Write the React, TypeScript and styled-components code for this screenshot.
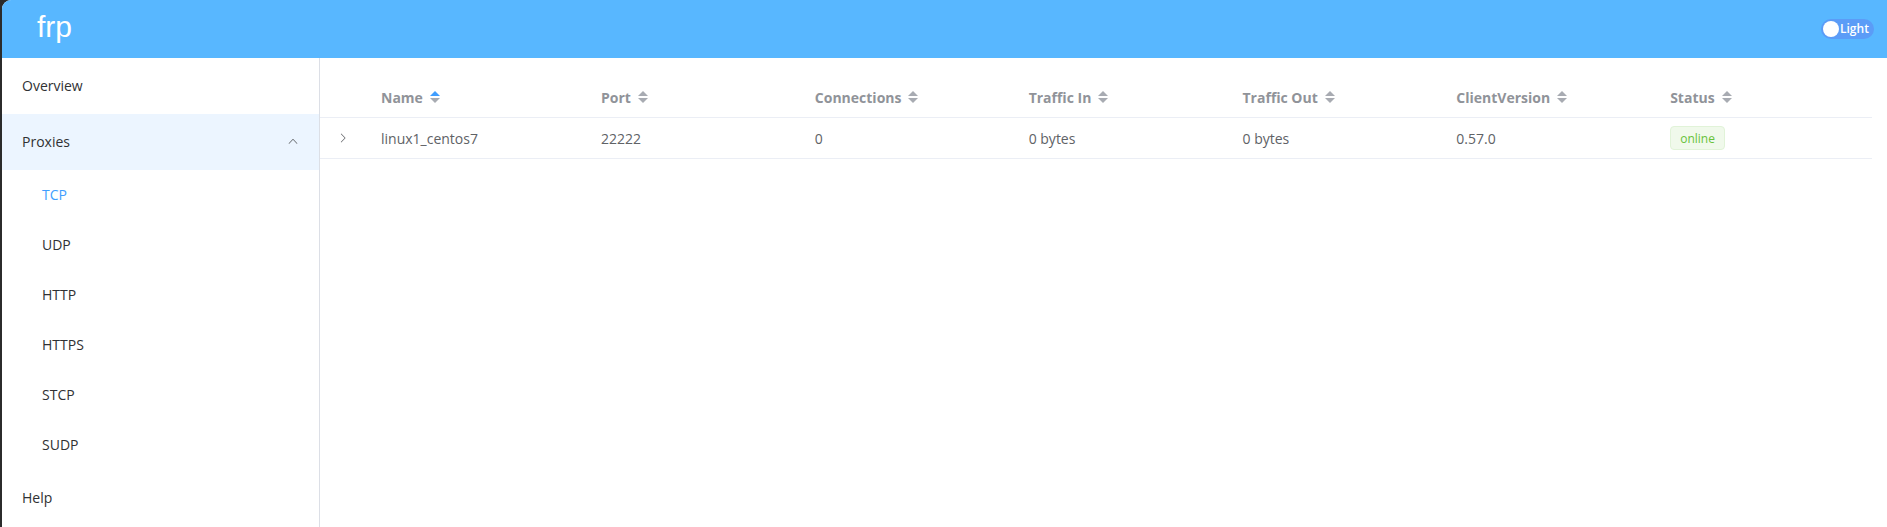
import React from 'react';
import styled, { createGlobalStyle } from 'styled-components';

const GlobalStyle = createGlobalStyle`
    html, body {
        margin: 0;
        padding: 0;
        background: #2b2b2b;
        height: 100%;
    }
    body {
        font-family: 'Open Sans', 'Liberation Sans', sans-serif;
        font-size: 14px;
        color: #303133;
    }
    * {
        box-sizing: border-box;
    }
`;

type Proxy = {
    name: string;
    port: number;
    conns: number;
    trafficIn: string;
    trafficOut: string;
    version: string;
    status: string;
};

const proxies: Proxy[] = [
    {
        name: 'linux1_centos7',
        port: 22222,
        conns: 0,
        trafficIn: '0 bytes',
        trafficOut: '0 bytes',
        version: '0.57.0',
        status: 'online',
    },
];

const columns = ['Name', 'Port', 'Connections', 'Traffic In', 'Traffic Out', 'ClientVersion', 'Status'];
const proxyTypes = ['TCP', 'UDP', 'HTTP', 'HTTPS', 'STCP', 'SUDP'];

const ChevronUp = () => (
    <svg width="12" height="12" viewBox="0 0 1024 1024">
        <path
            fill="currentColor"
            d="M488.832 344.32l-339.84 356.672a32 32 0 0 0 0 44.16l.384.384a29.44 29.44 0 0 0 42.688 0l320-335.872 319.872 335.872a29.44 29.44 0 0 0 42.688 0l.384-.384a32 32 0 0 0 0-44.16L535.168 344.32a32 32 0 0 0-46.336 0z"
        />
    </svg>
);

const ChevronRight = () => (
    <svg width="12" height="12" viewBox="0 0 1024 1024">
        <path
            fill="currentColor"
            d="M340.864 149.312a30.592 30.592 0 0 0 0 42.752L652.736 512 340.864 831.872a30.592 30.592 0 0 0 0 42.752 29.12 29.12 0 0 0 41.728 0L714.24 534.336a32 32 0 0 0 0-44.672L382.592 149.376a29.12 29.12 0 0 0-41.728 0z"
        />
    </svg>
);

const App = () => {
    return (
        <>
            <GlobalStyle />
            <StyledWindow>
                <StyledHeader>
                    <StyledBrand>frp</StyledBrand>
                    <StyledSwitch>
                        <StyledKnob />
                        <StyledSwitchText>Light</StyledSwitchText>
                    </StyledSwitch>
                </StyledHeader>
                <StyledBody>
                    <StyledSidebar>
                        <StyledMenuItem>Overview</StyledMenuItem>
                        <StyledMenuItem $open>
                            Proxies
                            <StyledArrow>
                                <ChevronUp />
                            </StyledArrow>
                        </StyledMenuItem>
                        {proxyTypes.map((t) => (
                            <StyledSubItem key={t} $active={t === 'TCP'}>
                                {t}
                            </StyledSubItem>
                        ))}
                        <StyledMenuItem>Help</StyledMenuItem>
                    </StyledSidebar>
                    <StyledMain>
                        <StyledHeadRow>
                            <StyledCell />
                            {columns.map((c, i) => (
                                <StyledHeadCell key={c}>
                                    {c}
                                    <StyledCarets>
                                        <StyledCaretUp $active={i === 0} />
                                        <StyledCaretDown />
                                    </StyledCarets>
                                </StyledHeadCell>
                            ))}
                        </StyledHeadRow>
                        {proxies.map((p) => (
                            <StyledRow key={p.name}>
                                <StyledExpand>
                                    <ChevronRight />
                                </StyledExpand>
                                <StyledCell>{p.name}</StyledCell>
                                <StyledCell>{p.port}</StyledCell>
                                <StyledCell>{p.conns}</StyledCell>
                                <StyledCell>{p.trafficIn}</StyledCell>
                                <StyledCell>{p.trafficOut}</StyledCell>
                                <StyledCell>{p.version}</StyledCell>
                                <StyledCell>
                                    <StyledTag>{p.status}</StyledTag>
                                </StyledCell>
                            </StyledRow>
                        ))}
                    </StyledMain>
                </StyledBody>
            </StyledWindow>
        </>
    );
};

const StyledWindow = styled.div`
    margin-left: 2px;
    height: 100vh;
    background: #fff;
    border-top-left-radius: 9px;
    overflow: hidden;
    display: flex;
    flex-direction: column;
`;

const StyledHeader = styled.header`
    height: 58px;
    flex: none;
    background: #58b7ff;
    display: flex;
    align-items: center;
    justify-content: space-between;
    padding: 0 13px 0 35px;
`;

const StyledBrand = styled.div`
    color: #fff;
    font-family: 'Liberation Sans', Arial, sans-serif;
    font-size: 30px;
    line-height: 1;
    margin-top: -4px;
`;

const StyledSwitch = styled.div`
    width: 53px;
    height: 20px;
    border-radius: 10px;
    background: #5b9cf7;
    display: flex;
    align-items: center;
    padding: 0 2px;
    gap: 1px;
`;

const StyledKnob = styled.span`
    width: 16px;
    height: 16px;
    border-radius: 50%;
    background: #fff;
    flex: none;
`;

const StyledSwitchText = styled.span`
    color: #fff;
    font-size: 12px;
    font-weight: 600;
    line-height: 1;
`;

const StyledBody = styled.div`
    flex: 1;
    display: flex;
    min-height: 0;
`;

const StyledSidebar = styled.nav`
    width: 318px;
    flex: none;
    border-right: 1px solid #dcdfe6;
`;

const StyledMenuItem = styled.div<{ $open?: boolean }>`
    height: 56px;
    display: flex;
    align-items: center;
    justify-content: space-between;
    padding: 0 20px 2px;
    color: #303133;
    background: ${(props) => (props.$open ? '#ecf5ff' : 'transparent')};
`;

const StyledArrow = styled.span`
    display: flex;
    color: #606266;
`;

const StyledSubItem = styled.div<{ $active?: boolean }>`
    height: 50px;
    display: flex;
    align-items: center;
    padding: 0 0 2px 40px;
    color: ${(props) => (props.$active ? '#409eff' : '#303133')};
`;

const StyledMain = styled.main`
    flex: 1;
    padding: 20px 15px 0 0;
`;

const tableGrid = `
    display: grid;
    grid-template-columns: 49px 220px repeat(6, 1fr);
    border-bottom: 1px solid #ebeef5;
`;

const StyledHeadRow = styled.div`
    ${tableGrid}
    height: 40px;
`;

const StyledRow = styled.div`
    ${tableGrid}
    height: 41px;
`;

const StyledCell = styled.div`
    display: flex;
    align-items: center;
    padding: 0 12px;
    color: #606266;
`;

const StyledHeadCell = styled(StyledCell)`
    color: #909399;
    font-weight: 700;
`;

const StyledExpand = styled(StyledCell)`
    justify-content: center;
    padding: 0;
    margin-left: -4px;
`;

const StyledCarets = styled.span`
    position: relative;
    width: 24px;
    height: 14px;
    flex: none;
`;

const caret = `
    position: absolute;
    left: 7px;
    width: 0;
    height: 0;
    border: 5px solid transparent;
`;

const StyledCaretUp = styled.i<{ $active?: boolean }>`
    ${caret}
    top: -5px;
    border-bottom-color: ${(props) => (props.$active ? '#409eff' : '#a8abb2')};
`;

const StyledCaretDown = styled.i`
    ${caret}
    bottom: -3px;
    border-top-color: #a8abb2;
`;

const StyledTag = styled.span`
    display: inline-flex;
    align-items: center;
    height: 24px;
    padding: 0 9px;
    font-size: 12px;
    color: #67c23a;
    background: #f0f9eb;
    border: 1px solid #e1f3d8;
    border-radius: 4px;
`;

export default App;
